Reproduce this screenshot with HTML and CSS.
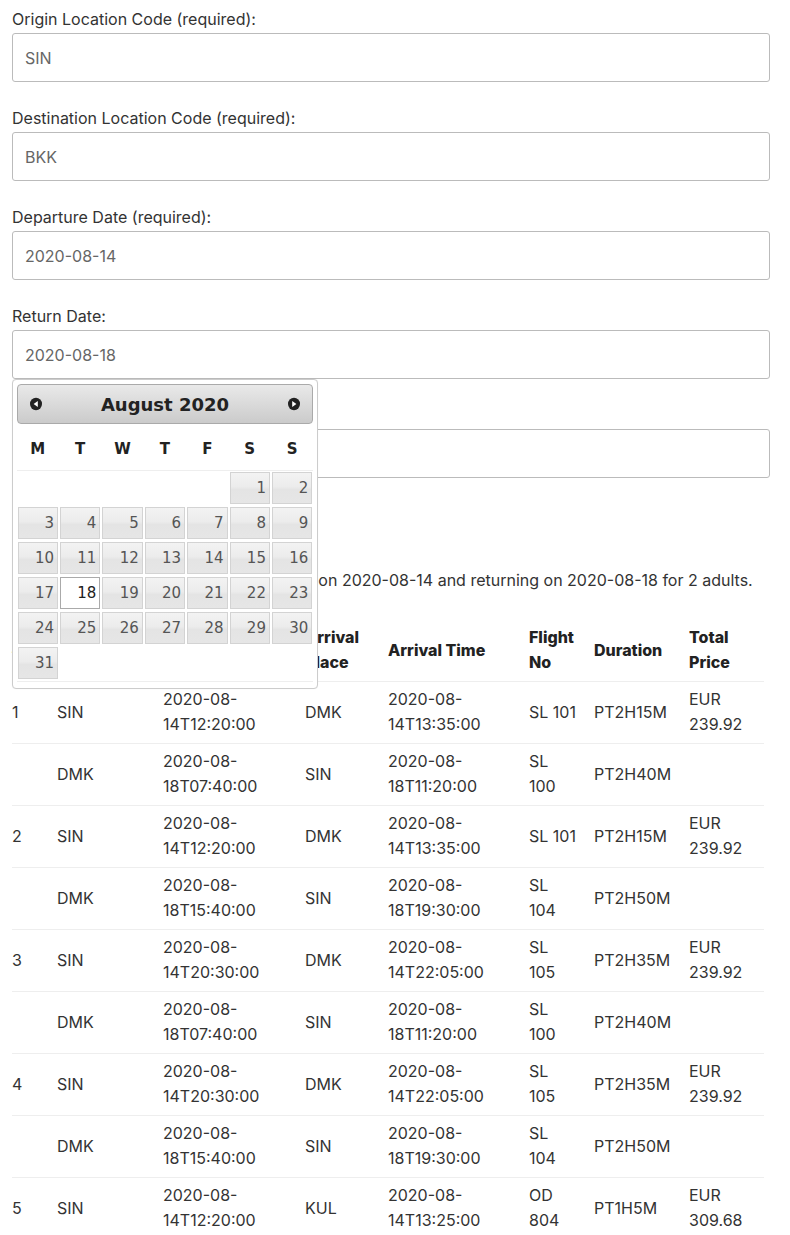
FILE: index.html
```html
<!DOCTYPE html>
<html lang="en">
<head>
<meta charset="utf-8">
<title>Flight Offers Search</title>
<link rel="stylesheet" href="styles.css">
</head>
<body>
<div class="page">
  <form class="search">
    <div class="field">
      <label class="field-label" for="origin">Origin Location Code (required):</label>
      <input class="field-input" id="origin" type="text" value="SIN">
    </div>
    <div class="field">
      <label class="field-label" for="dest">Destination Location Code (required):</label>
      <input class="field-input" id="dest" type="text" value="BKK">
    </div>
    <div class="field">
      <label class="field-label" for="dep">Departure Date (required):</label>
      <input class="field-input" id="dep" type="text" value="2020-08-14">
    </div>
    <div class="field">
      <label class="field-label" for="ret">Return Date:</label>
      <input class="field-input" id="ret" type="text" value="2020-08-18">
    </div>
    <div class="field">
      <label class="field-label" for="adults">Adults:</label>
      <input class="field-input" id="adults" type="text" value="2">
    </div>
    <button class="submit" type="button">Search</button>
  </form>

  <p class="summary">Found flights from SIN to BKK departing on 2020-08-14 and returning on 2020-08-18 for 2 adults.</p>

  <table class="offers">
    <colgroup>
      <col class="c-num"><col class="c-dplace"><col class="c-dtime"><col class="c-aplace"><col class="c-atime"><col class="c-flight"><col class="c-dur"><col class="c-price">
    </colgroup>
    <thead>
      <tr><th>#</th><th>Departure Place</th><th>Departure Time</th><th>Arrival Place</th><th>Arrival Time</th><th class="flight">Flight No</th><th>Duration</th><th>Total Price</th></tr>
    </thead>
    <tbody>
      <tr><td>1</td><td>SIN</td><td>2020-08-14T12:20:00</td><td>DMK</td><td>2020-08-14T13:35:00</td><td class="flight">SL 101</td><td>PT2H15M</td><td>EUR 239.92</td></tr>
      <tr><td></td><td>DMK</td><td>2020-08-18T07:40:00</td><td>SIN</td><td>2020-08-18T11:20:00</td><td class="flight">SL 100</td><td>PT2H40M</td><td></td></tr>
      <tr><td>2</td><td>SIN</td><td>2020-08-14T12:20:00</td><td>DMK</td><td>2020-08-14T13:35:00</td><td class="flight">SL 101</td><td>PT2H15M</td><td>EUR 239.92</td></tr>
      <tr><td></td><td>DMK</td><td>2020-08-18T15:40:00</td><td>SIN</td><td>2020-08-18T19:30:00</td><td class="flight">SL 104</td><td>PT2H50M</td><td></td></tr>
      <tr><td>3</td><td>SIN</td><td>2020-08-14T20:30:00</td><td>DMK</td><td>2020-08-14T22:05:00</td><td class="flight">SL 105</td><td>PT2H35M</td><td>EUR 239.92</td></tr>
      <tr><td></td><td>DMK</td><td>2020-08-18T07:40:00</td><td>SIN</td><td>2020-08-18T11:20:00</td><td class="flight">SL 100</td><td>PT2H40M</td><td></td></tr>
      <tr><td>4</td><td>SIN</td><td>2020-08-14T20:30:00</td><td>DMK</td><td>2020-08-14T22:05:00</td><td class="flight">SL 105</td><td>PT2H35M</td><td>EUR 239.92</td></tr>
      <tr><td></td><td>DMK</td><td>2020-08-18T15:40:00</td><td>SIN</td><td>2020-08-18T19:30:00</td><td class="flight">SL 104</td><td>PT2H50M</td><td></td></tr>
      <tr><td>5</td><td>SIN</td><td>2020-08-14T12:20:00</td><td>KUL</td><td>2020-08-14T13:25:00</td><td class="flight">OD 804</td><td>PT1H5M</td><td>EUR 309.68</td></tr>
    </tbody>
  </table>
</div>

<div class="datepicker">
  <div class="dp-header">
    <a class="dp-nav dp-prev" title="Prev">
      <svg class="dp-icon" viewBox="0 0 16 16" width="16" height="16"><ellipse cx="8" cy="8" rx="6" ry="6.2" fill="#222"/><polygon points="9.8,5 5.6,8 9.8,11" fill="#fff"/></svg>
    </a>
    <a class="dp-nav dp-next" title="Next">
      <svg class="dp-icon" viewBox="0 0 16 16" width="16" height="16"><ellipse cx="8" cy="8" rx="6" ry="6.2" fill="#222"/><polygon points="6.2,5 10.4,8 6.2,11" fill="#fff"/></svg>
    </a>
    <div class="dp-title">August 2020</div>
  </div>
  <table class="dp-calendar">
    <thead>
      <tr><th>M</th><th>T</th><th>W</th><th>T</th><th>F</th><th>S</th><th>S</th></tr>
    </thead>
    <tbody>
      <tr><td></td><td></td><td></td><td></td><td></td><td><a class="dp-day">1</a></td><td><a class="dp-day">2</a></td></tr>
      <tr><td><a class="dp-day">3</a></td><td><a class="dp-day">4</a></td><td><a class="dp-day">5</a></td><td><a class="dp-day">6</a></td><td><a class="dp-day">7</a></td><td><a class="dp-day">8</a></td><td><a class="dp-day">9</a></td></tr>
      <tr><td><a class="dp-day">10</a></td><td><a class="dp-day">11</a></td><td><a class="dp-day">12</a></td><td><a class="dp-day">13</a></td><td><a class="dp-day">14</a></td><td><a class="dp-day">15</a></td><td><a class="dp-day">16</a></td></tr>
      <tr><td><a class="dp-day">17</a></td><td><a class="dp-day dp-active">18</a></td><td><a class="dp-day">19</a></td><td><a class="dp-day">20</a></td><td><a class="dp-day">21</a></td><td><a class="dp-day">22</a></td><td><a class="dp-day">23</a></td></tr>
      <tr><td><a class="dp-day">24</a></td><td><a class="dp-day">25</a></td><td><a class="dp-day">26</a></td><td><a class="dp-day">27</a></td><td><a class="dp-day">28</a></td><td><a class="dp-day">29</a></td><td><a class="dp-day">30</a></td></tr>
      <tr class="dp-last"><td><a class="dp-day">31</a></td><td></td><td></td><td></td><td></td><td></td><td></td></tr>
    </tbody>
  </table>
</div>
</body>
</html>
```
FILE: styles.css
```css
* { box-sizing: border-box; }

body {
  margin: 0;
  background: #fff;
  font-family: "Inter", "Open Sans", sans-serif;
  font-size: 16px;
  color: #333;
}

.page {
  padding: 7px 20px 0 12px;
}

/* ---------- form ---------- */
.search {
  display: flex;
  flex-direction: column;
  gap: 24px;
}

.field {
  display: flex;
  flex-direction: column;
}

.field-label {
  display: block;
  height: 26px;
  line-height: 25px;
  font-size: 16px;
  color: #333;
}

.field-input {
  display: block;
  width: 100%;
  height: 49px;
  padding: 0 12px;
  border: 1px solid #bbb;
  border-radius: 3px;
  background: #fff;
  font-family: inherit;
  font-size: 16px;
  color: #666;
}

.submit {
  align-self: flex-start;
  height: 48px;
  padding: 0 28px;
  border: 0;
  border-radius: 2px;
  background: #222;
  color: #fff;
  font-family: inherit;
  font-size: 15px;
  font-weight: 800;
}

.summary {
  margin: 18px 0 0;
  line-height: 25px;
  color: #333;
}

/* ---------- offers table ---------- */
.offers {
  margin-top: 27px;
  width: 752px;
  border-collapse: collapse;
  table-layout: fixed;
}

.c-num { width: 45px; }
.c-dplace { width: 106px; }
.c-dtime { width: 142px; }
.c-aplace { width: 83px; }
.c-atime { width: 141px; }
.c-flight { width: 65px; }
.c-dur { width: 95px; }
.c-price { width: 75px; }

.offers th,
.offers td {
  padding: 5px 13px 6px 0;
  line-height: 25px;
  text-align: left;
  vertical-align: middle;
  border-bottom: 1px solid #eee;
}

.offers .flight {
  padding-right: 16px;
}

.offers th {
  font-weight: 800;
  color: #222;
}

.offers td {
  font-weight: 400;
  color: #333;
}

/* ---------- datepicker ---------- */
.datepicker {
  position: absolute;
  left: 12px;
  top: 379px;
  width: 306px;
  padding: 3.6px 3.6px 0;
  background: #fff;
  border: 1px solid #ccc;
  border-radius: 4px;
  box-shadow: 0 0 1px rgba(0, 0, 0, 0.08);
  font-family: "DejaVu Sans", Verdana, sans-serif;
  color: #222;
}

.dp-header {
  position: relative;
  height: 40px;
  border: 1px solid #aaa;
  border-radius: 4px;
  background: linear-gradient(to bottom, #e9e9e9 0%, #dadada 50%, #cbcbcb 100%);
}

.dp-title {
  margin: 0 40px;
  line-height: 39px;
  text-align: center;
  font-size: 18px;
  font-weight: bold;
  color: #222;
}

.dp-nav {
  position: absolute;
  top: 3px;
  width: 32px;
  height: 32px;
  display: flex;
  align-items: center;
  justify-content: center;
}

.dp-prev { left: 2px; }
.dp-next { right: 2px; }

.dp-icon { display: block; }

.dp-calendar {
  width: 100%;
  margin: 0 0 6px;
  border-collapse: collapse;
  table-layout: fixed;
  font-size: 15px;
}

.dp-calendar thead tr {
  border-bottom: 1px solid #eee;
}

.dp-calendar th {
  height: 47px;
  padding: 5px 0 0;
  text-align: center;
  font-weight: bold;
  color: #222;
}

.dp-calendar td {
  height: 35px;
  padding: 1px 1px 2px;
}

.dp-calendar .dp-last {
  border-bottom: 1px solid #eee;
}

.dp-day {
  display: block;
  height: 32px;
  padding: 0 3px;
  line-height: 31px;
  text-align: right;
  border: 1px solid #d3d3d3;
  background: linear-gradient(to bottom, #f3f3f3 0%, #ececec 45%, #e4e4e4 55%, #e6e6e6 100%);
  color: #555;
}

.dp-day.dp-active {
  border-color: #aaa;
  background: #fff;
  color: #212121;
}
```
